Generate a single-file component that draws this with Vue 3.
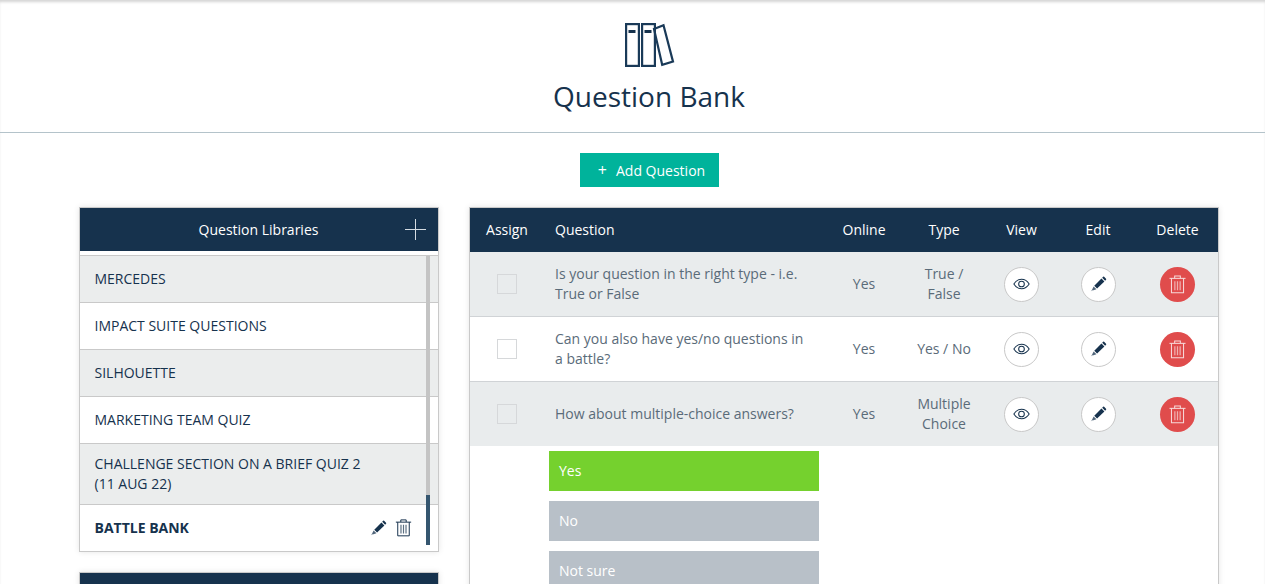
<script setup>
const libraries = [
  { name: 'MERCEDES' },
  { name: 'IMPACT SUITE QUESTIONS' },
  { name: 'SILHOUETTE' },
  { name: 'MARKETING TEAM QUIZ' },
  { name: 'CHALLENGE SECTION ON A BRIEF QUIZ 2 (11 AUG 22)' },
  { name: 'BATTLE BANK', active: true }
]
const questions = [
  { text: 'Is your question in the right type - i.e. True or False', online: 'Yes', type: 'True / False' },
  { text: 'Can you also have yes/no questions in a battle?', online: 'Yes', type: 'Yes / No' },
  { text: 'How about multiple-choice answers?', online: 'Yes', type: 'Multiple Choice' }
]
const answers = [
  { text: 'Yes', correct: true },
  { text: 'No' },
  { text: 'Not sure' }
]
</script>

<template>
  <div class="page">
    <svg class="defs" width="0" height="0" aria-hidden="true">
      <symbol id="pencil" viewBox="0 0 24 24">
        <path fill="currentColor" d="M7 14.2 16.6 4.6l3.9 3.900-9.700 9.600z" />
        <path fill="currentColor" d="M17.600 3.600l1.200-1.200a1 1 0 0 1 1.400 0l2.500 2.500a1 1 0 0 1 0 1.400l-1.200 1.200z" />
        <path fill="currentColor" opacity=".75" d="M6.200 15.200l3.700 3.700-5 1.600-.9-.9z" />
        <path fill="currentColor" opacity=".45" d="M3.800 19.800l.9.9-2.200.9z" />
      </symbol>
      <symbol id="trash" viewBox="0 0 18 20">
        <g fill="none" stroke="currentColor" stroke-width="1.100">
          <path d="M0.500 3.500h17" />
          <path d="M2.600 3.500v15.200h12.800V3.500" />
          <path d="M6 3.300V1h6v2.300" />
          <path d="M6.200 6.500v9.500M9 6.500v9.500M11.800 6.500v9.500" stroke-width="1.300" opacity=".7" />
        </g>
      </symbol>
      <symbol id="eye" viewBox="0 0 18 12">
        <g fill="none" stroke="currentColor" stroke-width="1.100">
          <path d="M.9 6C3 2.600 5.800 1 9 1s6 1.600 8.100 5C15 9.400 12.200 11 9 11S3 9.400 .9 6z" />
          <circle cx="9" cy="6" r="3" />
        </g>
      </symbol>
    </svg>

    <header class="hero">
      <svg class="hero-icon" width="50" height="44" viewBox="0 0 50 44" aria-hidden="true">
        <g fill="none" stroke="#1a3a58" stroke-width="2.200">
          <rect x="1.100" y="1.100" width="12.800" height="41.800" />
          <rect x="17.100" y="1.100" width="12.800" height="41.800" />
          <path d="M29 6 38.500 2.200 48 38.600 37.200 41.800z" />
        </g>
        <rect x="3.500" y="7" width="7" height="3" fill="#16324d" />
        <rect x="19.500" y="7" width="7" height="3" fill="#16324d" />
      </svg>
      <h1 class="title">Question Bank</h1>
    </header>

    <div class="actions">
      <button class="add-btn" type="button"><span class="add-plus">+</span>Add Question</button>
    </div>

    <main class="columns">
      <aside class="sidebar">
        <section class="panel">
          <div class="panel-head">
            <span>Question Libraries</span>
            <svg class="head-plus" width="21" height="21" viewBox="0 0 21 21" aria-hidden="true">
              <path d="M0 10.500h21M10.500 0v21" stroke="#d5dce2" stroke-width="1" />
            </svg>
          </div>
          <div class="lib-list">
            <div v-for="lib in libraries" :key="lib.name" class="lib-row" :class="{ active: lib.active }">
              <span class="lib-name">{{ lib.name }}</span>
              <span v-if="lib.active" class="lib-tools">
                <svg class="lib-pencil" width="18" height="18"><use href="#pencil" /></svg>
                <svg class="lib-trash" width="17" height="18"><use href="#trash" /></svg>
              </span>
            </div>
            <div class="scroll-track"><div class="scroll-thumb"></div></div>
          </div>
        </section>
        <section class="panel second"><div class="panel-head"></div></section>
      </aside>

      <section class="panel table">
        <div class="grid head">
          <div class="c">Assign</div>
          <div class="q">Question</div>
          <div class="c">Online</div>
          <div class="c">Type</div>
          <div class="c">View</div>
          <div class="c">Edit</div>
          <div class="c">Delete</div>
        </div>
        <div v-for="q in questions" :key="q.text" class="grid row">
          <div class="c"><span class="check"></span></div>
          <div class="q">{{ q.text }}</div>
          <div class="c">{{ q.online }}</div>
          <div class="c type">{{ q.type }}</div>
          <div class="c"><span class="round"><svg width="17" height="12"><use href="#eye" /></svg></span></div>
          <div class="c"><span class="round"><svg width="18" height="18"><use href="#pencil" /></svg></span></div>
          <div class="c"><span class="round danger"><svg width="17" height="19"><use href="#trash" /></svg></span></div>
        </div>
        <div class="answers">
          <div v-for="a in answers" :key="a.text" class="answer" :class="{ correct: a.correct }">{{ a.text }}</div>
        </div>
      </section>
    </main>
  </div>
</template>

<style>
html, body { margin: 0; height: 584px; overflow: hidden; background: #fff; }
</style>

<style scoped>
.page {
  height: 584px;
  overflow: hidden;
  font-family: "Open Sans", "Noto Sans", sans-serif;
  font-size: 14px;
  color: #16324d;
  background: #fff;
  box-shadow: inset 0 3px 3px -1px #d4d4d4;
}
.defs { position: absolute; }
.hero {
  height: 109px;
  border-bottom: 1px solid #b4c3ca;
  display: flex;
  flex-direction: column;
  align-items: center;
  padding: 23px 0 0 33px;
}
.hero-icon { display: block; margin-left: 1px; }
.title {
  margin: 10px 0 0;
  font-size: 28px;
  line-height: 38px;
  font-weight: 400;
}
.actions { display: flex; justify-content: center; padding: 20px 0 0 33px; }
.add-btn {
  width: 139px;
  height: 34px;
  border: 0;
  padding: 0 0 0 5px;
  background: #00b39b;
  color: #fff;
  font: 14px/34px "Open Sans", sans-serif;
}
.add-plus { margin-right: 9px; font-size: 16px; }
.columns {
  display: flex;
  align-items: flex-start;
  gap: 30px;
  padding: 20px 0 0 79px;
}
.sidebar { width: 360px; display: flex; flex-direction: column; gap: 20px; }
.panel {
  border: 1px solid #c9c9c9;
  box-shadow: 0 0 6px rgba(0, 0, 0, .1);
  background: #fff;
}
.panel-head {
  position: relative;
  height: 43px;
  background: #16324d;
  color: #fff;
  display: flex;
  align-items: center;
  justify-content: center;
}
.panel-head span { margin-left: -1px; }
.second { height: 60px; }
.head-plus { position: absolute; right: 12px; top: 11px; }
.lib-list { position: relative; padding-top: 4px; }
.lib-row {
  min-height: 26px;
  padding: 10px 48px 10px 14.500px;
  border-top: 1px solid #c9c9c9;
  display: flex;
  align-items: center;
  justify-content: space-between;
  line-height: 20px;
}
.lib-row:nth-child(odd) { background: #ebeded; }
.lib-row.active { font-weight: 700; padding-right: 25px; }
.lib-name { max-width: 275px; }
.lib-tools { display: flex; align-items: center; gap: 8px; color: #16324d; margin-right: 1px; }
.lib-tools svg { display: block; }
.lib-trash { color: #16324d; }
.scroll-track {
  position: absolute;
  top: 5px;
  bottom: 6px;
  right: 8px;
  width: 4px;
  background: #c4c4c4;
}
.scroll-thumb {
  position: absolute;
  bottom: 0;
  left: 0;
  right: 0;
  height: 50px;
  background: #35566f;
}
.table { width: 750px; box-sizing: border-box; height: 500px; }
.grid {
  display: grid;
  grid-template-columns: 74px 280px 80px 80px 75px 78px 81px;
  align-items: center;
}
.head { height: 44px; background: #16324d; color: #fff; padding-bottom: 1px; box-sizing: border-box; }
.row { height: 64px; border-bottom: 1px solid #d0d3d6; color: #5a6b79; line-height: 20px; }
.row:nth-child(4) { border-bottom: 0; }
.row:nth-child(even) { background: #e9eced; }
.c { text-align: center; }
.type { padding: 0 12px; }
.c:has(.round), .c:has(.check) { display: flex; justify-content: center; align-items: center; }
.q { padding: 0 15px 0 11px; }
.check {
  width: 18px;
  height: 18px;
  border: 1px solid #d6d8da;
  background: transparent;
}
.round {
  width: 33px;
  height: 33px;
  border: 1px solid #c8c8c8;
  border-radius: 50%;
  background: #fff;
  color: #16324d;
  display: flex;
  align-items: center;
  justify-content: center;
}
.round svg { display: block; }
.round.danger { width: 35px; height: 35px; border: 0; background: #e04c4c; color: #f6d9d9; }
.answers {
  display: flex;
  flex-direction: column;
  gap: 10px;
  padding: 5px 0 0 79px;
}
.answer {
  width: 270px;
  height: 40px;
  box-sizing: border-box;
  padding-left: 10px;
  line-height: 40px;
  background: #b8c0c8;
  color: #fff;
}
.answer.correct { background: #75d12e; }
</style>
